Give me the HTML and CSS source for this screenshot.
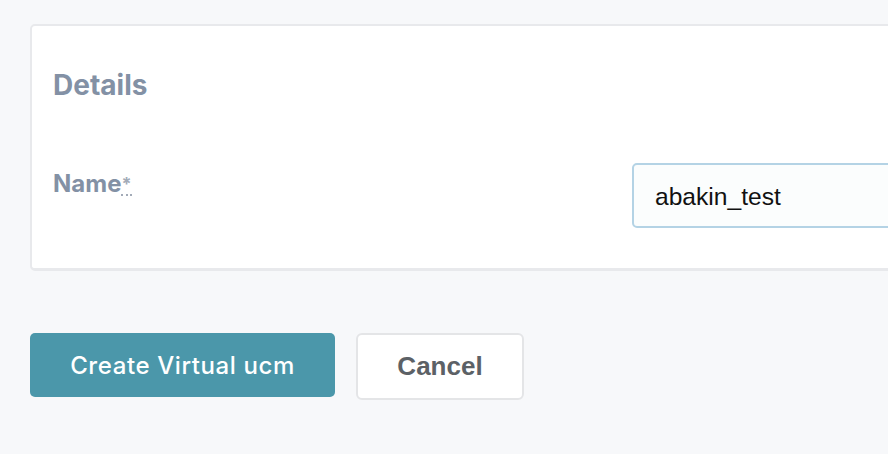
FILE: index.html
```html
<!DOCTYPE html>
<html lang="en">
<head>
<meta charset="utf-8">
<title>Create Virtual ucm</title>
<link rel="stylesheet" href="styles.css">
</head>
<body>
<main class="page">
  <section class="card">
    <h2 class="card-title">Details</h2>
    <div class="form-row">
      <label class="field-label" for="name">Name<abbr class="required" title="required">*</abbr></label>
      <input class="text-input" id="name" type="text" value="abakin_test">
    </div>
  </section>
  <div class="actions">
    <button class="btn btn-primary" type="button">Create Virtual ucm</button>
    <button class="btn btn-secondary" type="button">Cancel</button>
  </div>
</main>
</body>
</html>
```

FILE: styles.css
```css
html, body {
  margin: 0;
  padding: 0;
}

body {
  background: #f7f8fa;
  overflow: hidden;
  font-family: Inter, Roboto, "Liberation Sans", sans-serif;
}

.page {
  padding: 24px 0 0 30px;
  width: 1200px;
}

.card {
  width: 1100px;
  background: #ffffff;
  border: 2px solid #e8e9ec;
  border-bottom-width: 3px;
  border-radius: 5px;
  padding: 42px 21px 40px 21px;
  box-sizing: border-box;
}

.card-title {
  margin: 0;
  font-size: 28px;
  line-height: 34px;
  font-weight: 700;
  color: #8391a5;
}

.form-row {
  display: grid;
  grid-template-columns: 579px 1fr;
  margin-top: 61px;
  align-items: start;
}

.field-label {
  font-size: 24px;
  line-height: 33px;
  font-weight: 700;
  color: #8391a5;
  padding-top: 4px;
}

.required {
  color: #a3abb8;
  font-size: 18px;
  vertical-align: top;
  text-decoration: none;
  border-bottom: 2px dotted #a3abb8;
  cursor: help;
}

.text-input {
  height: 65px;
  box-sizing: border-box;
  border: 2px solid #b4d3e5;
  border-radius: 5px;
  background: #fbfdfd;
  padding: 2px 21px 0;
  font-family: "Liberation Sans", Arial, sans-serif;
  font-size: 24.6px;
  color: #111111;
  outline: none;
  width: 100%;
}

.actions {
  display: flex;
  gap: 21px;
  margin-top: 62px;
  align-items: flex-start;
}

.btn {
  box-sizing: border-box;
  cursor: pointer;
}

.btn-primary {
  width: 305px;
  height: 64px;
  background: #4b97aa;
  border: none;
  border-radius: 5px;
  color: #ffffff;
  font-family: Inter, Roboto, sans-serif;
  font-size: 24px;
  letter-spacing: 0.6px;
  font-weight: 500;
}

.btn-secondary {
  width: 168px;
  height: 67px;
  background: #ffffff;
  border: 2px solid #e4e5e7;
  border-radius: 6px;
  color: #5c6166;
  font-family: "Liberation Sans", Arial, sans-serif;
  font-size: 26px;
  font-weight: 700;
}
```
